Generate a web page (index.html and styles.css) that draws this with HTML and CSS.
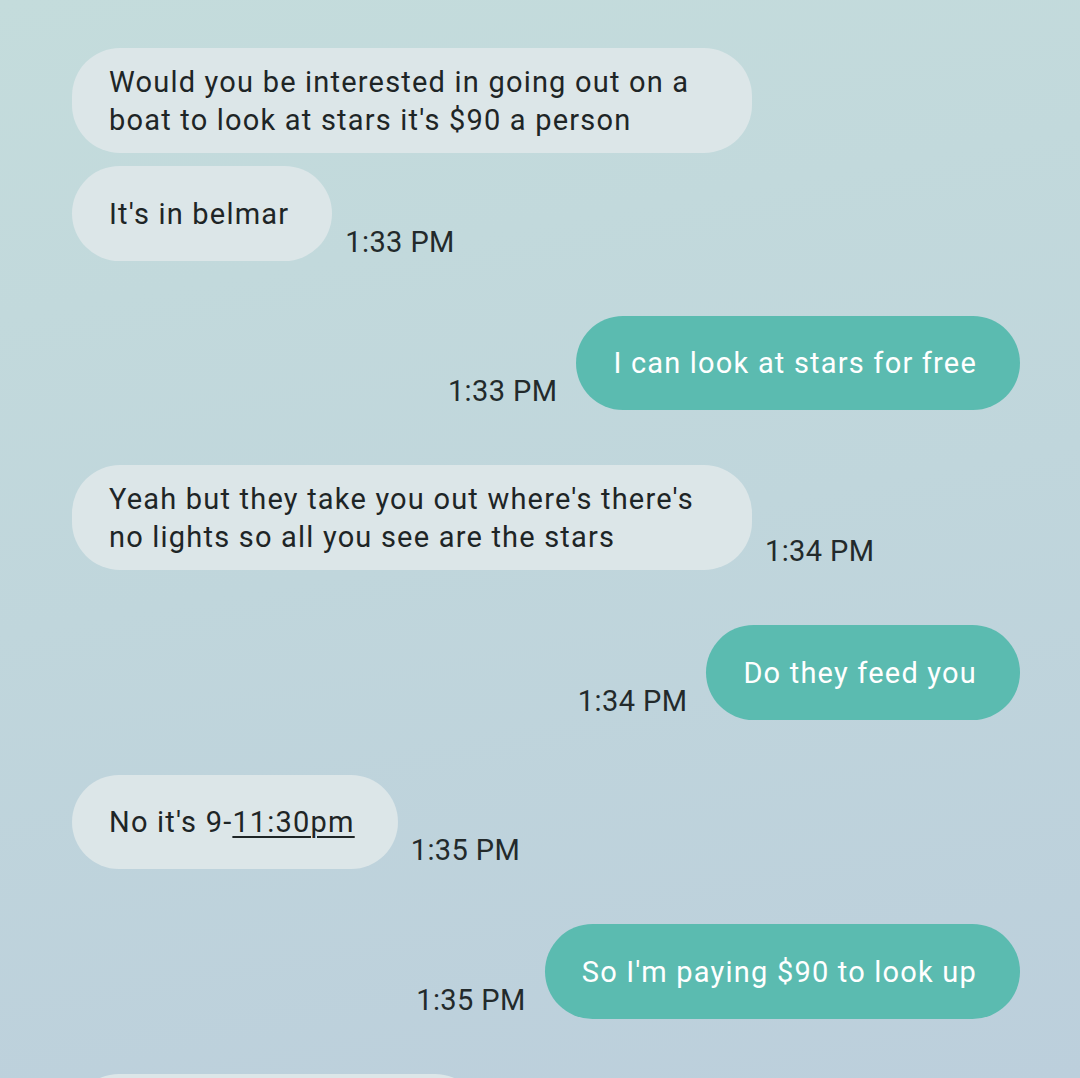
FILE: index.html
```html
<!DOCTYPE html>
<html lang="en">

<head>
  <meta charset="UTF-8">
  <title>Messages</title>
  <link rel="stylesheet" href="styles.css">
</head>

<body>

  <div class="thread">

    <div class="group">
      <div class="row in">
        <div class="bubble">Would you be interested in going out on a boat to look at stars it's $90 a person</div>
      </div>
      <div class="row in">
        <div class="bubble">It's in belmar</div>
        <span class="time">1:33 PM</span>
      </div>
    </div>

    <div class="group">
      <div class="row out">
        <span class="time">1:33 PM</span>
        <div class="bubble">I can look at stars for free</div>
      </div>
    </div>

    <div class="group">
      <div class="row in">
        <div class="bubble">Yeah but they take you out where's there's no lights so all you see are the stars</div>
        <span class="time">1:34 PM</span>
      </div>
    </div>

    <div class="group">
      <div class="row out">
        <span class="time">1:34 PM</span>
        <div class="bubble">Do they feed you</div>
      </div>
    </div>

    <div class="group">
      <div class="row in">
        <div class="bubble">No it's 9-<a href="#">11:30pm</a></div>
        <span class="time">1:35 PM</span>
      </div>
    </div>

    <div class="group">
      <div class="row out">
        <span class="time">1:35 PM</span>
        <div class="bubble">So I'm paying $90 to look up</div>
      </div>
    </div>

    <div class="group">
      <div class="row in">
        <div class="bubble bubble-next"></div>
      </div>
    </div>

  </div>

</body>

</html>
```

FILE: styles.css
```css
* {
  box-sizing: border-box;
}

html,
body {
  margin: 0;
  height: 100%;
}

body {
  font-family: Roboto, "Noto Sans", sans-serif;
  font-size: 29px;
  color: #1e2526;
  background: linear-gradient(170deg, #c4dcdc 0%, #c0d6dc 50%, #bccfdc 100%);
  overflow: hidden;
}

/* THREAD */

.thread {
  display: flex;
  flex-direction: column;
  gap: 55px;
  padding: 48px 60px 0 72px;
}

.group {
  display: flex;
  flex-direction: column;
  gap: 13px;
}

.row {
  display: flex;
  align-items: flex-end;
}

.row.out {
  justify-content: flex-end;
}

/* BUBBLES */

.bubble {
  display: flex;
  align-items: center;
  min-height: 94.5px;
  max-width: 680px;
  padding: 15px 43px 14px 37px;
  line-height: 38px;
  letter-spacing: 1.2px;
  border-radius: 48px;
}

.in .bubble {
  background-color: #dce6e8;
}

.out .bubble {
  background-color: #5bbbb0;
  color: #ffffff;
}

.bubble a {
  color: inherit;
  text-decoration: underline;
  text-underline-offset: 4px;
  text-decoration-thickness: 2px;
  white-space: pre;
}

.bubble-next {
  width: 410px;
}

/* TIMESTAMPS */

.time {
  line-height: 1;
  padding-bottom: 4px;
  letter-spacing: 0.4px;
  white-space: nowrap;
  color: #232a2b;
}

.in .time {
  margin-left: 13px;
}

.out .time {
  margin-right: 19px;
}
```
